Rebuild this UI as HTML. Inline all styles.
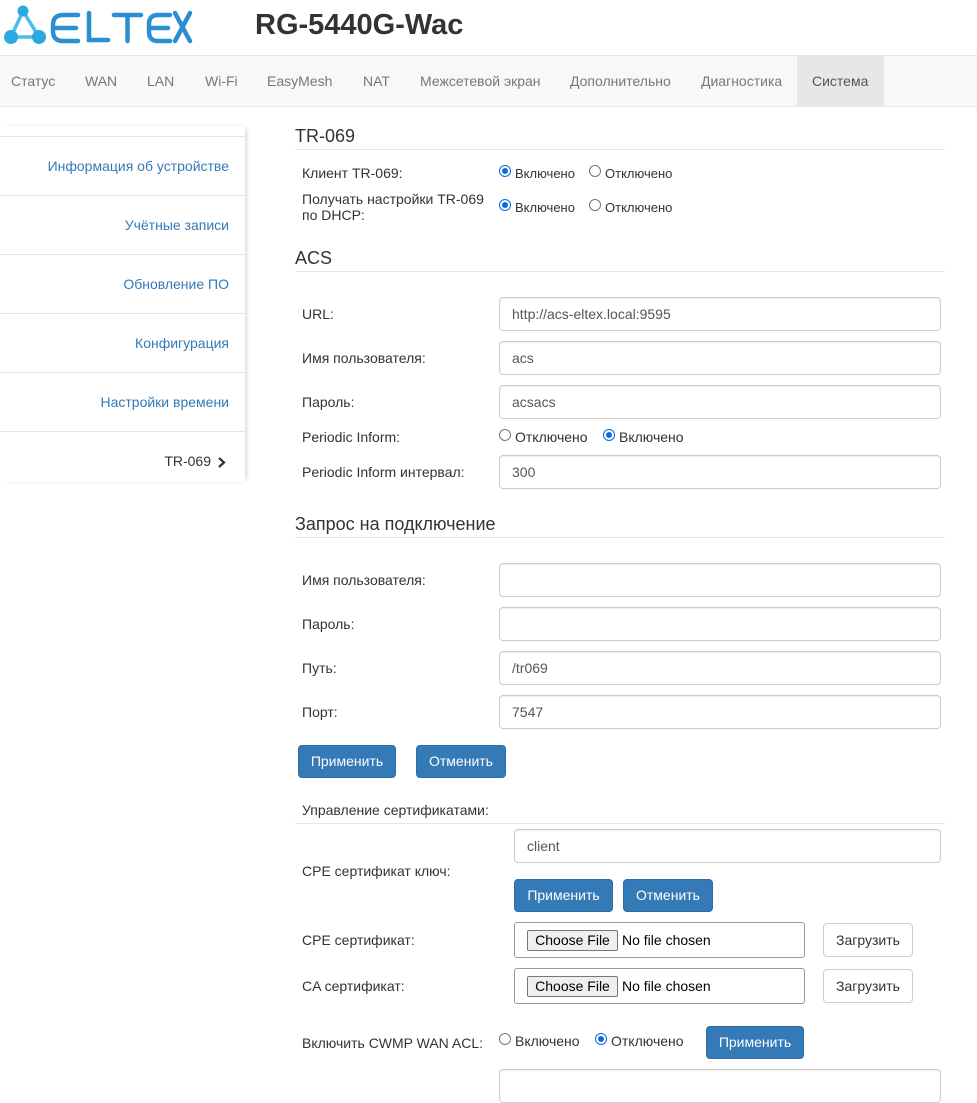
<!DOCTYPE html><html><head><meta charset="utf-8"><style>
*{box-sizing:border-box}
body{margin:0;width:977px;height:1075px;overflow:hidden;font-family:"Liberation Sans",Arial,sans-serif;font-size:14px;color:#333;background:#fff;position:relative}
.a{position:absolute;white-space:nowrap}
.nav{position:absolute;left:0;top:55px;width:977px;height:52px;background:#f8f8f8;border-top:1px solid #e7e7e7;border-bottom:1px solid #e7e7e7}
.nav span{position:absolute;top:17px;color:#777}
.side{position:absolute;left:0;top:126px;width:245px;height:356px;background:#fff;box-shadow:3px 0 5px -2px rgba(0,0,0,.2)}
.si{position:absolute;left:0;width:245px;border-top:1px solid #e5e5e5;height:59px}
.si span{position:absolute;right:16px;top:21px;color:#337ab7}
h3{position:absolute;margin:0;font-weight:normal;font-size:18px;color:#333;left:295px;width:650px;border-bottom:1px solid #e5e5e5;padding-bottom:2px}
.in{position:absolute;left:499px;width:442px;height:34px;border:1px solid #ccc;border-radius:4px;padding:8px 12px;color:#555;box-shadow:inset 0 1px 1px rgba(0,0,0,.075)}
.btn{position:absolute;height:33px;background:#337ab7;color:#fff;border-radius:4px;border:1px solid #2e6da4;text-align:center;line-height:31px}
.bw{position:absolute;height:34px;border:1px solid #ccc;border-radius:4px;text-align:center;line-height:32px;color:#333;width:90px}
.r{position:absolute;width:12px;height:12px;border:1px solid #767676;border-radius:50%;background:#fff}
.r.c{border:1.5px solid #0a6cdb}
.r.c:after{content:"";position:absolute;left:1.5px;top:1.5px;width:6px;height:6px;border-radius:50%;background:#0a6cdb}
.f{position:absolute;left:514px;width:291px;height:36px;border:1px solid #999;border-radius:3px}
.f b{position:absolute;left:12px;top:7px;width:91px;height:21px;background:#efefef;border:1px solid #767676;border-radius:2px;font-weight:normal;text-align:center;line-height:19px;color:#000}
.f span{position:absolute;left:107px;top:9px;color:#000}
</style></head><body>
<svg class="a" style="left:2px;top:4px" width="192" height="42" viewBox="0 0 192 42">
<g stroke="#4cbde8" stroke-width="3.5" fill="none"><path d="M21 7 L9 33 M21 7 L37 33 M9 33 L37 33"/></g>
<circle cx="21" cy="7" r="5.5" fill="#2aa8e0"/><circle cx="9" cy="33" r="7" fill="#2aa8e0"/><circle cx="37" cy="33" r="7" fill="#2aa8e0"/><circle cx="23" cy="25" r="5" fill="#fff"/>
<g stroke="#2a8fd0" stroke-width="4.5" fill="none" stroke-linecap="round"><path d="M76 11 H61 Q51 11 51 21 V27 Q51 37 61 37 H76 M52 24 H74"/><path d="M87 9 V36 H106"/><path d="M112 11 H139 M125.5 11 V37"/><path d="M168 11 H156 Q147 11 147 20 V28 Q147 37 156 37 H168 M148 24 H166"/><path d="M173 9 L188 37 M188 9 L173 37"/></g></svg>
<div class="a" style="left:255px;top:9px;font-size:29px;font-weight:bold;color:#333">RG-5440G-Wac</div>
<div class="nav"><div style="position:absolute;left:797px;top:0;width:87px;height:50px;background:#e7e7e7"></div>
<span style="left:11px">Статус</span><span style="left:85px">WAN</span><span style="left:147px">LAN</span><span style="left:205px">Wi-Fi</span><span style="left:267px">EasyMesh</span><span style="left:363px">NAT</span><span style="left:420px">Межсетевой экран</span><span style="left:570px">Дополнительно</span><span style="left:701px">Диагностика</span><span style="left:812px;color:#555">Система</span></div>
<div class="side">
<div class="si" style="top:10px"><span>Информация об устройстве</span></div>
<div class="si" style="top:69px"><span>Учётные записи</span></div>
<div class="si" style="top:128px"><span>Обновление ПО</span></div>
<div class="si" style="top:187px"><span>Конфигурация</span></div>
<div class="si" style="top:246px"><span>Настройки времени</span></div>
<div class="si" style="top:305px"><span style="color:#333;right:34px">TR-069</span><svg style="position:absolute;left:217px;top:25px" width="9" height="11"><path d="M2 1 L7 5.5 L2 10" stroke="#333" stroke-width="2.2" fill="none"/></svg></div>
</div>
<h3 style="top:126px">TR-069</h3>
<div class="a" style="left:302px;top:165px">Клиент TR-069:</div>
<div class="r c" style="left:499px;top:165px"></div><div class="a" style="left:515px;top:166px;font-size:13px">Включено</div>
<div class="r" style="left:589px;top:165px"></div><div class="a" style="left:605px;top:166px;font-size:13px">Отключено</div>
<div class="a" style="left:302px;top:191px;line-height:16px">Получать настройки TR-069<br>по DHCP:</div>
<div class="r c" style="left:499px;top:199px"></div><div class="a" style="left:515px;top:200px;font-size:13px">Включено</div>
<div class="r" style="left:589px;top:199px"></div><div class="a" style="left:605px;top:200px;font-size:13px">Отключено</div>
<h3 style="top:248px">ACS</h3>
<div class="a" style="left:302px;top:306px">URL:</div><div class="in" style="top:297px">http://acs-eltex.local:9595</div>
<div class="a" style="left:302px;top:350px">Имя пользователя:</div><div class="in" style="top:341px">acs</div>
<div class="a" style="left:302px;top:394px">Пароль:</div><div class="in" style="top:385px">acsacs</div>
<div class="a" style="left:302px;top:429px">Periodic Inform:</div>
<div class="r" style="left:499px;top:429px"></div><div class="a" style="left:515px;top:429px">Отключено</div>
<div class="r c" style="left:603px;top:429px"></div><div class="a" style="left:619px;top:429px">Включено</div>
<div class="a" style="left:302px;top:464px">Periodic Inform интервал:</div><div class="in" style="top:455px">300</div>
<h3 style="top:514px">Запрос на подключение</h3>
<div class="a" style="left:302px;top:572px">Имя пользователя:</div><div class="in" style="top:563px"></div>
<div class="a" style="left:302px;top:616px">Пароль:</div><div class="in" style="top:607px"></div>
<div class="a" style="left:302px;top:660px">Путь:</div><div class="in" style="top:651px">/tr069</div>
<div class="a" style="left:302px;top:704px">Порт:</div><div class="in" style="top:695px">7547</div>
<div class="btn" style="left:298px;top:745px;width:98px">Применить</div>
<div class="btn" style="left:416px;top:745px;width:90px">Отменить</div>
<div class="a" style="left:302px;top:802px">Управление сертификатами:</div>
<div class="a" style="left:295px;top:823px;width:650px;border-top:1px solid #e5e5e5"></div>
<div class="in" style="left:514px;width:427px;top:829px">client</div>
<div class="a" style="left:302px;top:863px">CPE сертификат ключ:</div>
<div class="btn" style="left:514px;top:879px;width:99px">Применить</div>
<div class="btn" style="left:623px;top:879px;width:90px">Отменить</div>
<div class="a" style="left:302px;top:932px">CPE сертификат:</div>
<div class="f" style="top:922px"><b>Choose File</b><span>No file chosen</span></div>
<div class="bw" style="left:823px;top:923px">Загрузить</div>
<div class="a" style="left:302px;top:978px">CA сертификат:</div>
<div class="f" style="top:968px"><b>Choose File</b><span>No file chosen</span></div>
<div class="bw" style="left:823px;top:969px">Загрузить</div>
<div class="a" style="left:302px;top:1035px">Включить CWMP WAN ACL:</div>
<div class="r" style="left:499px;top:1033px"></div><div class="a" style="left:515px;top:1033px">Включено</div>
<div class="r c" style="left:595px;top:1033px"></div><div class="a" style="left:611px;top:1033px">Отключено</div>
<div class="btn" style="left:706px;top:1026px;width:98px">Применить</div>
<div class="in" style="top:1069px"></div>
</body></html>
